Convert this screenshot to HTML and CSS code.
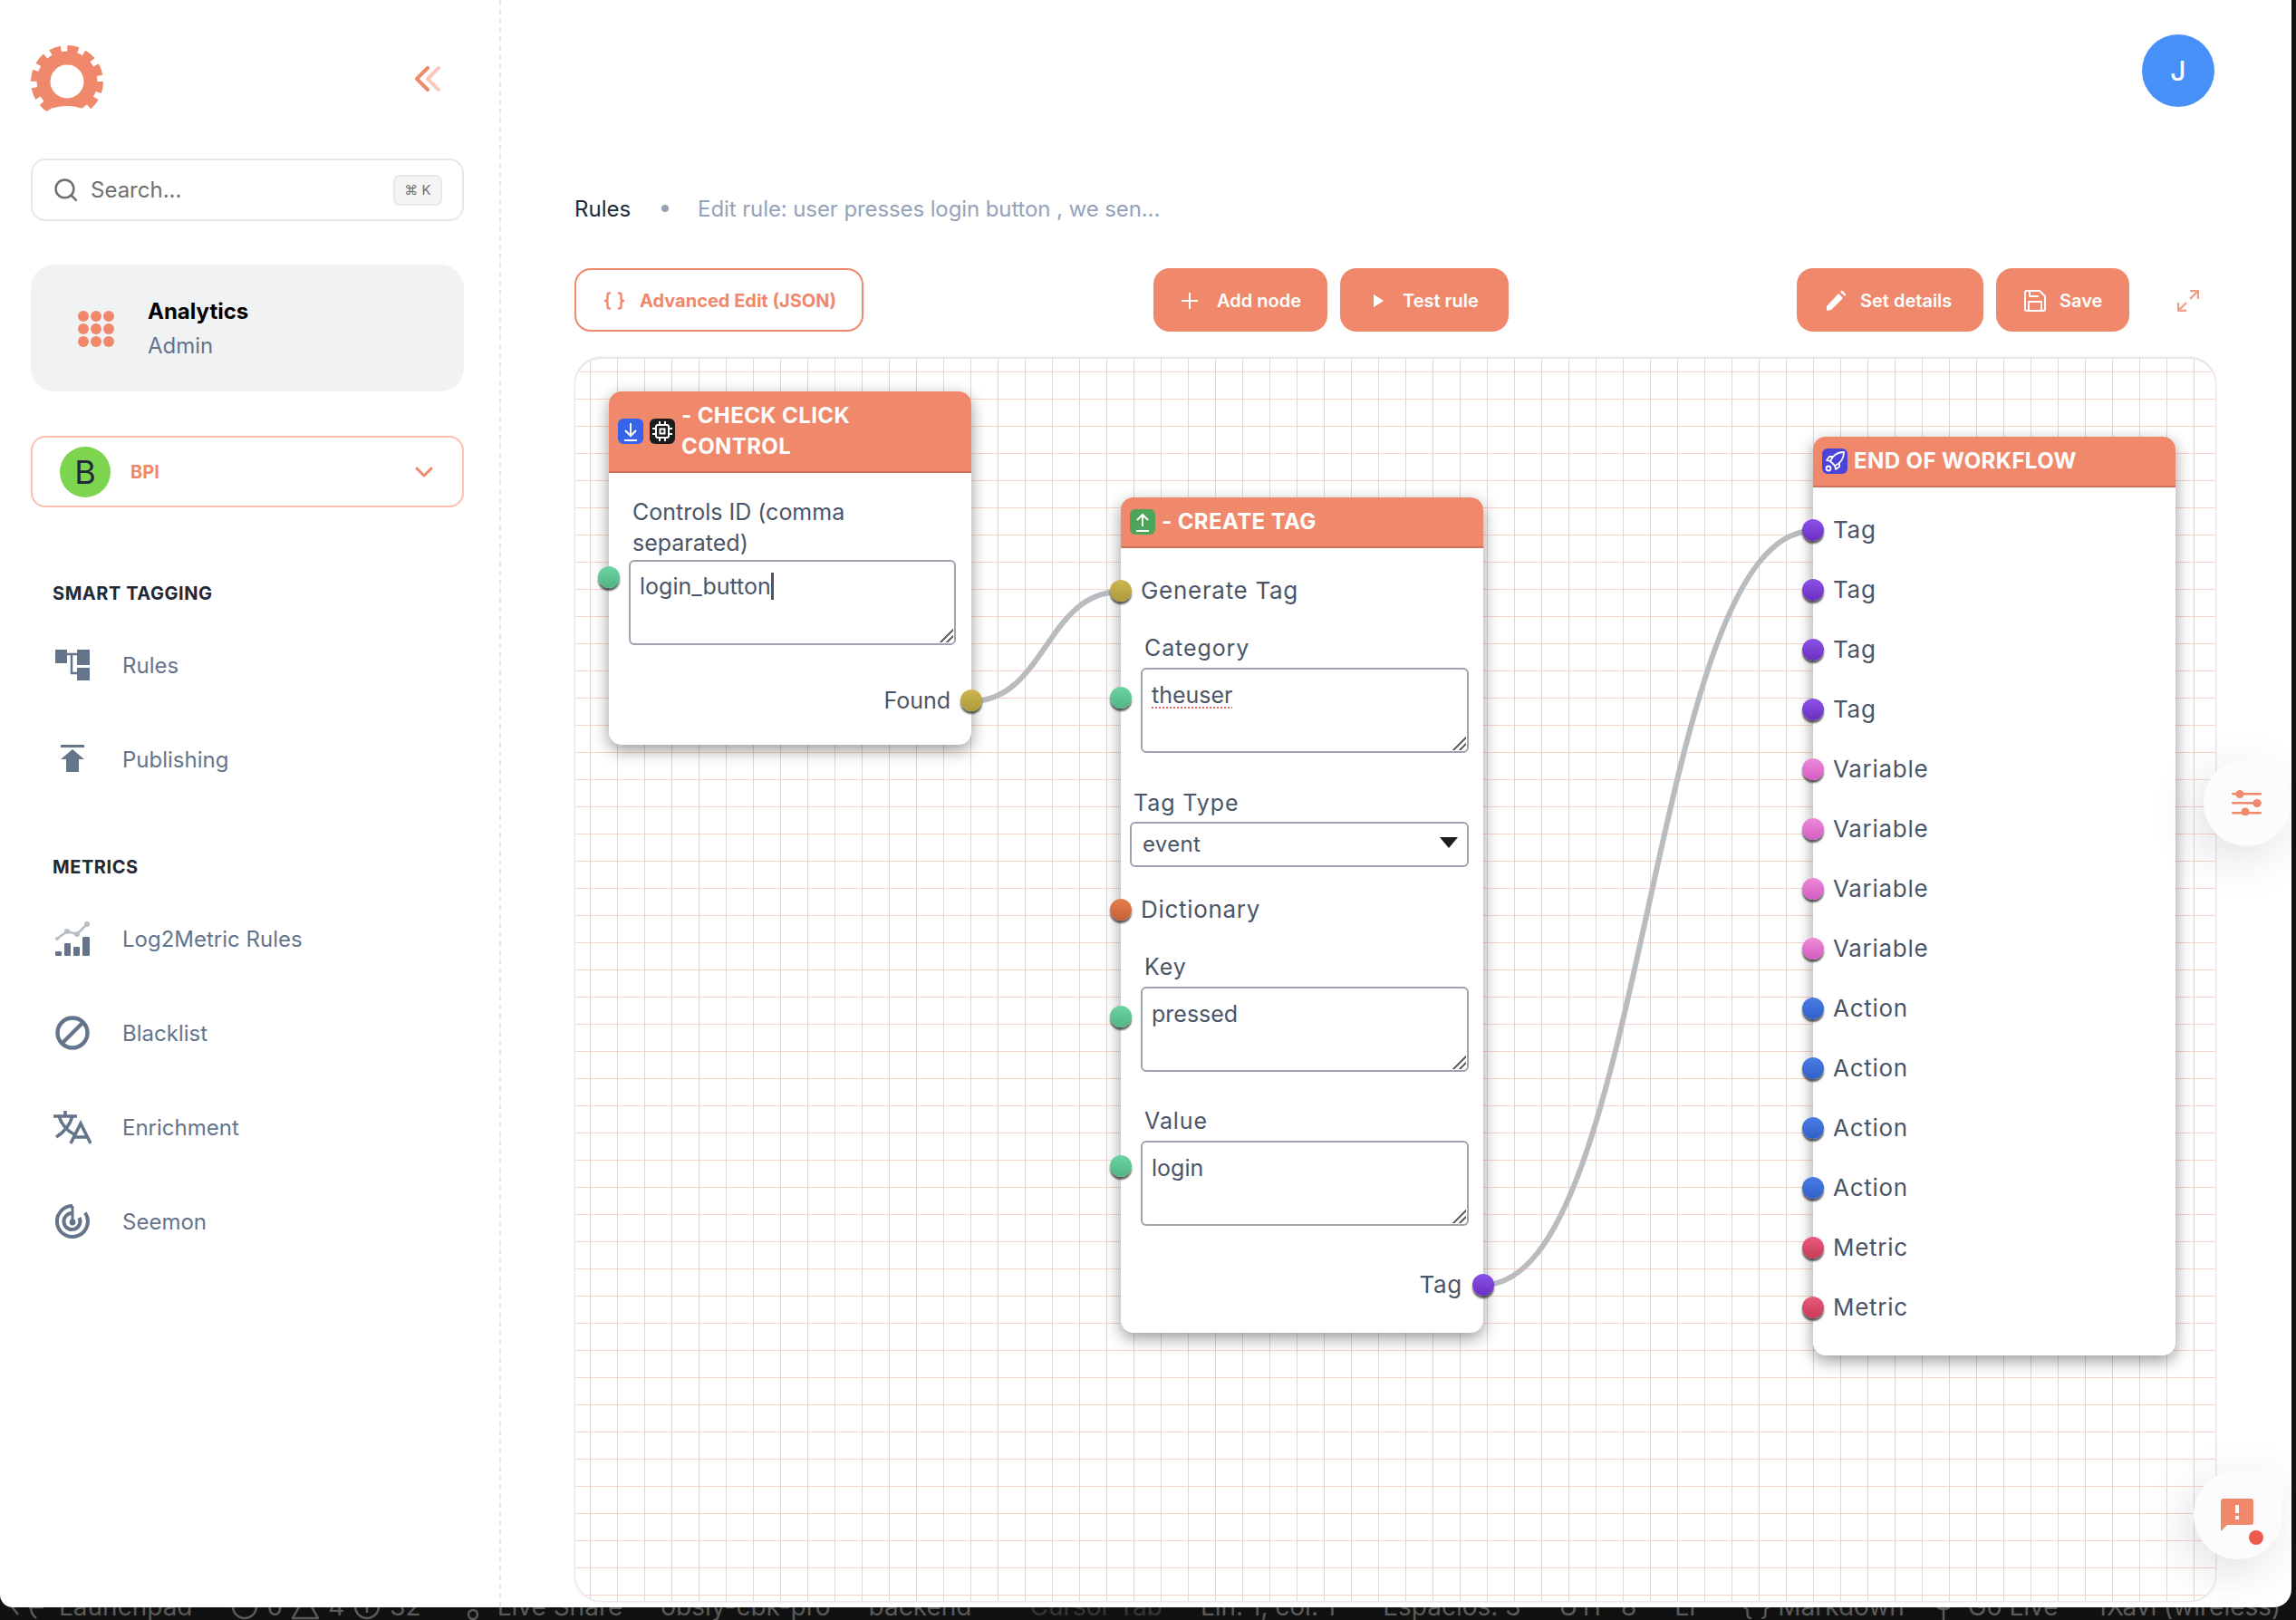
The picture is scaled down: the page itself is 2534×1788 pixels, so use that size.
FILE: index.html
```html
<!DOCTYPE html>
<html lang="en">
<head>
  <meta charset="UTF-8" />
  <title>Rules - Edit rule</title>
  <link rel="stylesheet" href="styles.css">
</head>
<body>

  <div class="panel">
    <aside class="sidebar">
      <div class="brand">
        <svg class="gear" viewBox="0 0 80 80">
          <circle cx="40" cy="40" r="26" fill="none" stroke="#f0886b" stroke-width="15" />
          <circle cx="40" cy="40" r="36" fill="none" stroke="#f0886b" stroke-width="8" stroke-dasharray="12 6.85" />
          <ellipse cx="40" cy="80" rx="27" ry="13" fill="#fff" />
        </svg>
        <svg class="collapse" viewBox="0 0 28 28" fill="none" stroke-width="4" stroke-linecap="round" stroke-linejoin="round">
          <path d="M14 2 L2 14 L14 26" stroke="#f0886b" />
          <path d="M26 2 L14 14 L26 26" stroke="#fbc9bb" />
        </svg>
      </div>

      <div class="search">
        <svg class="search-icon" viewBox="0 0 24 24" fill="none" stroke="#6f6f6f" stroke-width="2.4" stroke-linecap="round">
          <circle cx="11" cy="11" r="9.5" />
          <path d="M18 18 L23 23" />
        </svg>
        <span class="search-text">Search...</span>
        <span class="kbd">⌘&nbsp;K</span>
      </div>

      <div class="app-card">
        <div class="dots">
          <i></i><i></i><i></i><i></i><i></i><i></i><i></i><i></i><i></i>
        </div>
        <div>
          <div class="app-name">Analytics</div>
          <div class="app-role">Admin</div>
        </div>
      </div>

      <div class="org-select">
        <span class="org-avatar">B</span>
        <span class="org-name">BPI</span>
        <svg class="org-chevron" viewBox="0 0 20 12" fill="none" stroke="#f0886b" stroke-width="3" stroke-linecap="round" stroke-linejoin="round">
          <path d="M2 2 L10 10 L18 2" />
        </svg>
      </div>

      <h3 class="nav-title">SMART TAGGING</h3>
      <ul class="nav-list">
        <li>
          <svg class="nav-icon" viewBox="0 0 38 38" fill="#64748b">
            <rect x="0" y="2" width="13" height="15" />
            <rect x="24" y="2" width="14" height="17" />
            <rect x="24" y="22" width="14" height="14" />
            <path d="M13 7 H24 M18 7 V28 H24" fill="none" stroke="#64748b" stroke-width="2.5" />
          </svg>
          <a href="#">Rules</a>
        </li>
        <li>
          <svg class="nav-icon" viewBox="0 0 38 38" fill="#64748b">
            <rect x="6" y="3" width="26" height="3" />
            <path d="M19 8 L32 19 H26 V33 H12 V19 H6 Z" />
          </svg>
          <a href="#">Publishing</a>
        </li>
      </ul>

      <h3 class="nav-title nav-title-second">METRICS</h3>
      <ul class="nav-list">
        <li>
          <svg class="nav-icon" viewBox="0 0 38 38" fill="#64748b">
            <path d="M2 19 L13 11 L24 14 L36 2" fill="none" stroke="#b7bdc7" stroke-width="2.5" />
            <circle cx="13" cy="11" r="3" fill="#b7bdc7" />
            <circle cx="24" cy="14" r="3" fill="#b7bdc7" />
            <circle cx="35" cy="3" r="3" fill="#b7bdc7" />
            <circle cx="2" cy="19" r="2" fill="#b7bdc7" />
            <rect x="0" y="33" width="7" height="5" rx="1" />
            <rect x="10" y="24" width="7" height="14" rx="1" />
            <rect x="20" y="28" width="7" height="10" rx="1" />
            <rect x="30" y="17" width="8" height="21" rx="1" />
          </svg>
          <a href="#">Log2Metric Rules</a>
        </li>
        <li>
          <svg class="nav-icon" viewBox="0 0 38 38" fill="none" stroke="#64748b" stroke-width="4.4">
            <circle cx="19" cy="19" r="16.5" />
            <path d="M7 31 L31 7" />
          </svg>
          <a href="#">Blacklist</a>
        </li>
        <li>
          <svg class="nav-icon nav-icon-wide" viewBox="0 0 42 38" fill="none" stroke="#64748b" stroke-width="3.6">
            <path d="M0 7 H26 M13 1 V7 M6 7 C9 16 15 23 23 27 M21 7 C18 17 11 25 3 30" />
            <path d="M19 37 L30 15 L41 37 M23 30 H37" />
          </svg>
          <a href="#">Enrichment</a>
        </li>
        <li>
          <svg class="nav-icon" viewBox="0 0 38 38" fill="none" stroke="#64748b" stroke-width="4">
            <path d="M19 2 A17 17 0 1 0 33 9.5" />
            <path d="M19 10 A9 9 0 1 0 26.5 15" />
            <path d="M19 2 V21" stroke-width="3" />
            <circle cx="19" cy="20" r="3.4" fill="#64748b" stroke="none" />
          </svg>
          <a href="#">Seemon</a>
        </li>
      </ul>
    </aside>

    <main class="main">
      <div class="topbar"><span class="avatar">J</span></div>

      <div class="breadcrumb">
        <span class="crumb">Rules</span>
        <span class="crumb-dot"></span>
        <span class="crumb-current">Edit rule: user presses login button , we sen...</span>
      </div>

      <div class="toolbar">
        <button class="btn btn-outline">
          <svg class="btn-icon" viewBox="0 0 24 20" fill="none" stroke="#f0886b" stroke-width="2.4" stroke-linecap="round" stroke-linejoin="round">
            <path d="M7 1.5 H6.5 Q4.5 1.5 4.5 4 V7.5 Q4.5 10 2 10 Q4.5 10 4.5 12.5 V16 Q4.5 18.5 6.5 18.5 H7" />
            <path d="M17 1.5 H17.5 Q19.5 1.5 19.5 4 V7.5 Q19.5 10 22 10 Q19.5 10 19.5 12.5 V16 Q19.5 18.5 17.5 18.5 H17" />
          </svg>
          Advanced Edit (JSON)
        </button>
        <div class="btn-group btn-group-center">
          <button class="btn btn-add">
            <svg class="btn-icon btn-icon-plus" viewBox="0 0 18 18" fill="none" stroke="#fff" stroke-width="2">
              <path d="M9 0 V18 M0 9 H18" />
            </svg>
            Add node
          </button>
          <button class="btn btn-test">
            <svg class="btn-icon btn-icon-play" viewBox="0 0 11 14" fill="#fff">
              <path d="M0 0 L11 7 L0 14 Z" />
            </svg>
            Test rule
          </button>
        </div>
        <div class="btn-group btn-group-right">
          <button class="btn btn-details">
            <svg class="btn-icon" viewBox="0 0 24 24" fill="#fff">
              <path d="M2 18 L15 4 L20 9 L7 22 L2 23 Z" />
              <path d="M17 2 L19 0.5 L23.5 5 L22 7 Z" />
            </svg>
            Set details
          </button>
          <button class="btn btn-save">
            <svg class="btn-icon" viewBox="0 0 24 24" fill="none" stroke="#fff" stroke-width="2" stroke-linejoin="round">
              <path d="M3 1 H17 L23 7 V21 Q23 23 21 23 H3 Q1 23 1 21 V3 Q1 1 3 1 Z" />
              <path d="M6 1 V7 H16 M5 23 V13 H19 V23" />
            </svg>
            Save
          </button>
        </div>
        <svg class="expand" viewBox="0 0 24 24" fill="none" stroke="#f0a08a" stroke-width="2.4">
          <path d="M14 1 H23 V10 M23 1 L14 10" />
          <path d="M10 23 H1 V14 M1 23 L10 14" />
        </svg>
      </div>

      <div class="canvas">
        <svg class="wires" fill="none" stroke="#b9bbbf" stroke-width="6">
          <path d="M436 378 C519 378 519 257 602 257" />
          <path d="M1002 1022 C1184 1022 1184 190 1366 190" />
        </svg>

        <!-- node 1 -->
        <div class="node node-check">
          <div class="node-head">
            <span class="badge badge-blue">
              <svg viewBox="0 0 28 28" fill="none" stroke="#fff" stroke-width="2"><path d="M14 5 V18 M8 13 L14 19 L20 13 M7 24 H21" /></svg>
            </span>
            <span class="badge badge-black">
              <svg viewBox="0 0 28 28" fill="none" stroke="#fff" stroke-width="2"><rect x="7" y="7" width="14" height="14" rx="2" /><rect x="11.5" y="11.5" width="5" height="5" /><path d="M11 3 V6 M17 3 V6 M11 22 V25 M17 22 V25 M3 11 H6 M3 17 H6 M22 11 H25 M22 17 H25" /></svg>
            </span>
            <span class="node-title">- CHECK CLICK CONTROL</span>
          </div>
          <div class="node-body">
            <div class="port port-wrapped">
              <span class="socket socket-in socket-green socket-wrapped"></span>
              <label class="field-label">Controls ID (comma separated)</label>
              <div class="field-box field-box-check">login_button<span class="caret"></span></div>
            </div>
            <div class="port port-out port-found">
              <span>Found</span>
              <span class="socket socket-out socket-yellow"></span>
            </div>
          </div>
        </div>

        <!-- node 2 -->
        <div class="node node-tag">
          <div class="node-head">
            <span class="badge badge-green">
              <svg viewBox="0 0 28 28" fill="none" stroke="#fff" stroke-width="2"><path d="M14 6 V19 M8 12 L14 6 L20 12 M7 24 H21" /></svg>
            </span>
            <span class="node-title">- CREATE TAG</span>
          </div>
          <div class="node-body">
            <div class="port port-text port-first">
              <span class="socket socket-in socket-yellow"></span>
              Generate Tag
            </div>
            <div class="port port-field port-category">
              <span class="socket socket-in socket-green socket-field"></span>
              <label class="field-label">Category</label>
              <div class="field-box"><span class="spell">theuser</span></div>
            </div>
            <div class="port port-select">
              <label class="field-label">Tag Type</label>
              <div class="select-wrap">
                <select>
                  <option>event</option>
                </select>
              </div>
            </div>
            <div class="port port-text port-dict">
              <span class="socket socket-in socket-orange"></span>
              Dictionary
            </div>
            <div class="port port-field port-key">
              <span class="socket socket-in socket-green socket-field"></span>
              <label class="field-label">Key</label>
              <div class="field-box">pressed</div>
            </div>
            <div class="port port-field port-value">
              <span class="socket socket-in socket-green socket-value"></span>
              <label class="field-label">Value</label>
              <div class="field-box">login</div>
            </div>
            <div class="port port-out port-tag">
              <span>Tag</span>
              <span class="socket socket-out socket-purple"></span>
            </div>
          </div>
        </div>

        <!-- node 3 -->
        <div class="node node-end">
          <div class="node-head">
            <span class="badge badge-indigo">
              <svg viewBox="0 0 28 28" fill="none" stroke="#fff" stroke-width="1.8" stroke-linejoin="round"><path d="M24 4 C17 4 11 8 9 14 L14 19 C20 17 24 11 24 4 Z" /><path d="M9 14 L5 13 L8 9 H12 M14 19 L15 23 L19 20 V16" /><circle cx="7" cy="22" r="2.5" /></svg>
            </span>
            <span class="node-title">END OF WORKFLOW</span>
          </div>
          <div class="node-body node-body-list">
            <div class="port port-row"><span class="socket socket-in socket-purple"></span>Tag</div>
            <div class="port port-row"><span class="socket socket-in socket-purple"></span>Tag</div>
            <div class="port port-row"><span class="socket socket-in socket-purple"></span>Tag</div>
            <div class="port port-row"><span class="socket socket-in socket-purple"></span>Tag</div>
            <div class="port port-row"><span class="socket socket-in socket-pink"></span>Variable</div>
            <div class="port port-row"><span class="socket socket-in socket-pink"></span>Variable</div>
            <div class="port port-row"><span class="socket socket-in socket-pink"></span>Variable</div>
            <div class="port port-row"><span class="socket socket-in socket-pink"></span>Variable</div>
            <div class="port port-row"><span class="socket socket-in socket-blue"></span>Action</div>
            <div class="port port-row"><span class="socket socket-in socket-blue"></span>Action</div>
            <div class="port port-row"><span class="socket socket-in socket-blue"></span>Action</div>
            <div class="port port-row"><span class="socket socket-in socket-blue"></span>Action</div>
            <div class="port port-row"><span class="socket socket-in socket-red"></span>Metric</div>
            <div class="port port-row"><span class="socket socket-in socket-red"></span>Metric</div>
          </div>
        </div>
      </div>
    </main>

    <button class="float-btn float-settings">
      <svg viewBox="0 0 34 28" fill="#f0886b">
        <rect x="0" y="3" width="33" height="2.6" rx="1.3" />
        <rect x="0" y="13" width="33" height="2.6" rx="1.3" />
        <rect x="0" y="24" width="33" height="2.6" rx="1.3" />
        <circle cx="9" cy="4.5" r="4.5" />
        <circle cx="28" cy="14.5" r="4.5" />
        <circle cx="15" cy="24" r="4.5" />
      </svg>
    </button>
    <button class="float-btn float-feedback">
      <svg viewBox="0 0 36 36" fill="#f0886b">
        <path d="M3 0 H33 Q36 0 36 3 V26 Q36 29 33 29 H7 L0 36 V3 Q0 0 3 0 Z" />
        <rect x="16" y="7" width="4" height="9" fill="#fff" />
        <rect x="16" y="19" width="4" height="4" fill="#fff" />
      </svg>
      <span class="float-dot"></span>
    </button>
  </div>

  <footer class="statusbar">
    <div class="status-row">
      <span class="status-item status-remote">
        <svg class="status-icon" viewBox="0 0 44 30"><path d="M2 6 L16 24 M36 4 C28 10 28 22 36 28 M28 16 H44" /></svg>
        Launchpad
      </span>
      <span class="status-item status-problems">
        <svg class="status-icon status-icon-small" viewBox="0 0 30 30"><circle cx="15" cy="15" r="13" /></svg>
        0
        <svg class="status-icon status-icon-small" viewBox="0 0 30 30"><path d="M15 3 L29 28 H1 Z" /></svg>
        4
        <svg class="status-icon status-icon-small" viewBox="0 0 30 30"><circle cx="15" cy="15" r="13" /><path d="M15 8 V22" /></svg>
        32
      </span>
      <span class="status-item">
        <svg class="status-icon status-icon-small" viewBox="0 0 30 30"><circle cx="15" cy="24" r="5" /></svg>
        Live Share
      </span>
      <span class="status-item">obsly-cbk-pro</span>
      <span class="status-item">backend</span>
      <span class="status-item status-dim">Cursor Tab</span>
      <span class="status-item">Lín. 1, col. 1</span>
      <span class="status-item status-spaces">Espacios: 3</span>
      <span class="status-item">UTF-8</span>
      <span class="status-item">LF</span>
      <span class="status-item">{ } Markdown</span>
      <span class="status-item status-live">
        <svg class="status-icon status-icon-small" viewBox="0 0 30 30"><path d="M15 10 V30 M6 4 C4 12 8 18 15 18 C22 18 26 12 24 4" /></svg>
        Go Live
      </span>
      <span class="status-item">1Xavi (wireless)</span>
    </div>
  </footer>

</body>
</html>
```

FILE: styles.css
```css
/* Reset and base */
* {
  box-sizing: border-box;
  margin: 0;
  padding: 0;
}
html, body {
  width: 2534px;
  height: 1788px;
  overflow: hidden;
  background: #111;
  font-family: Inter, "Liberation Sans", sans-serif;
}

.panel {
  position: relative;
  display: flex;
  width: 2529px;
  height: 1774px;
  background: #fff;
  border-radius: 0 0 20px 14px;
  overflow: hidden;
}

/* Sidebar */
.sidebar {
  width: 553px;
  flex-shrink: 0;
  padding: 50px 39px 0 34px;
  border-right: 2px dashed #e5e7eb;
}
.brand {
  display: flex;
  justify-content: space-between;
  align-items: flex-start;
  height: 125px;
}
.gear {
  width: 80px;
  height: 80px;
}
.collapse {
  width: 28px;
  height: 28px;
  margin: 23px 26px 0 0;
}

.search {
  display: flex;
  align-items: center;
  height: 69px;
  padding: 0 22px 0 24px;
  border: 2px solid #e5e7eb;
  border-radius: 16px;
}
.search-icon {
  width: 25px;
  height: 25px;
}
.search-text {
  flex-grow: 1;
  margin-left: 15px;
  font-size: 24px;
  color: #6f6f6f;
}
.kbd {
  display: flex;
  align-items: center;
  justify-content: center;
  width: 54px;
  height: 34px;
  background: #f4f4f5;
  border: 2px solid #e8e8e8;
  border-radius: 7px;
  font-size: 15px;
  color: #6f6f6f;
}

.app-card {
  display: flex;
  align-items: center;
  height: 140px;
  margin-top: 48px;
  padding: 1px 0 0 52px;
  background: #f1f2f4;
  border-radius: 26px;
}
.dots {
  display: grid;
  grid-template-columns: repeat(3, 12px);
  gap: 2px;
  margin-right: 37px;
}
.dots i {
  width: 12px;
  height: 12px;
  border-radius: 50%;
  background: #f0886b;
}
.app-name {
  font-size: 24px;
  font-weight: 700;
  color: #000;
  line-height: 34px;
}
.app-role {
  margin-top: 4px;
  font-size: 24px;
  color: #64748b;
  line-height: 34px;
}

.org-select {
  display: flex;
  align-items: center;
  height: 79px;
  margin-top: 49px;
  padding: 0 32px 0 30px;
  border: 2px solid #fbbfb0;
  border-radius: 16px;
}
.org-avatar {
  display: flex;
  align-items: center;
  justify-content: center;
  width: 56px;
  height: 56px;
  border-radius: 50%;
  background: #7dd44f;
  color: #1f2937;
  font-size: 36px;
}
.org-name {
  flex-grow: 1;
  margin-left: 22px;
  font-size: 20px;
  font-weight: 700;
  color: #f0886b;
}
.org-chevron {
  width: 20px;
  height: 12px;
}

.nav-title {
  margin: 81px 0 0 24px;
  font-size: 20px;
  font-weight: 700;
  line-height: 28px;
  letter-spacing: 0.55px;
  color: #1f2937;
}
.nav-title-second {
  margin-top: 53px;
}
.nav-list {
  list-style: none;
  margin-top: 13px;
}
.nav-list li {
  display: flex;
  align-items: center;
  height: 104px;
  padding-left: 27px;
}
.nav-list a {
  margin-left: 36px;
  font-size: 24px;
  color: #64748b;
  text-decoration: none;
}
.nav-icon {
  width: 38px;
  height: 38px;
  flex-shrink: 0;
}
.nav-icon-wide {
  width: 42px;
  margin: 0 -2px;
}

/* Main content */
.main {
  flex-grow: 1;
  padding: 38px 83px 0 81px;
}
.topbar {
  display: flex;
  justify-content: flex-end;
  height: 80px;
}
.avatar {
  display: flex;
  align-items: center;
  justify-content: center;
  width: 80px;
  height: 80px;
  margin-right: 2px;
  border-radius: 50%;
  background: #4790f7;
  color: #fff;
  font-size: 30px;
  font-weight: 500;
}
.breadcrumb {
  display: flex;
  align-items: center;
  height: 34px;
  margin-top: 95px;
  font-size: 24px;
}
.crumb {
  color: #1f2937;
}
.crumb-dot {
  width: 8px;
  height: 8px;
  margin: 0 32px 0 34px;
  border-radius: 50%;
  background: #94a3b8;
}
.crumb-current {
  color: #94a3b8;
  letter-spacing: -0.1px;
}

.toolbar {
  display: flex;
  align-items: center;
  margin-top: 49px;
}
.btn {
  display: flex;
  align-items: center;
  height: 70px;
  padding: 2px 0 0 31px;
  border: none;
  border-radius: 18px;
  background: #f0886b;
  color: #fff;
  font-family: inherit;
  font-size: 20px;
  font-weight: 600;
  white-space: nowrap;
  cursor: pointer;
}
.btn-add { width: 192px; }
.btn-test { width: 186px; }
.btn-details { width: 206px; }
.btn-save { width: 147px; }
.btn-outline {
  width: 319px;
  padding-left: 30px;
  background: #fff;
  border: 2px solid #f0886b;
  color: #f0886b;
  font-weight: 700;
}
.btn-icon {
  width: 24px;
  height: 24px;
  margin-right: 15px;
}
.btn-outline .btn-icon {
  margin-right: 16px;
}
.btn-icon-plus {
  width: 18px;
  height: 18px;
  margin-right: 21px;
}
.btn-icon-play {
  width: 11px;
  height: 14px;
  margin-right: 21px;
  margin-left: 6px;
}
.btn-group {
  display: flex;
  gap: 14px;
}
.btn-group-center {
  margin-left: 320px;
}
.btn-group-right {
  margin-left: auto;
}
.expand {
  width: 24px;
  height: 24px;
  margin: 2px 19px 0 53px;
}

/* Node canvas */
.canvas {
  position: relative;
  height: 1374px;
  margin-top: 28px;
  border: 1px solid #e8e8e8;
  border-top-width: 2px;
  border-radius: 30px;
  box-shadow: 0 0 2px rgb(0 0 0 / 0.15);
  background-color: #fff;
  background-image:
    linear-gradient(to right, #f7cec3 1px, transparent 1px),
    linear-gradient(to bottom, #f9d3c9 1px, transparent 1px);
  background-size: 30px 30px;
  background-position: 16px 14px;
  overflow: hidden;
}
.wires {
  position: absolute;
  left: 0;
  top: 0;
  width: 100%;
  height: 100%;
}

.node {
  position: absolute;
  width: 400px;
  background: #fff;
  border-radius: 14px;
  box-shadow: 0 6px 18px rgb(0 0 0 / 0.4);
  color: #4a5568;
  font-size: 26px;
  letter-spacing: 0.7px;
}
.node-check {
  left: 37px;
  top: 36px;
  height: 390px;
  font-size: 25px;
  letter-spacing: 0;
}
.node-tag {
  left: 602px;
  top: 153px;
  height: 922px;
}
.node-end {
  left: 1366px;
  top: 86px;
  height: 1014px;
}

.node-head {
  display: flex;
  align-items: center;
  gap: 7px;
  min-height: 56px;
  padding: 0 40px 0 10px;
  background: #f0886b;
  border-bottom: 2px solid #cd755b;
  border-radius: 14px 14px 0 0;
  color: #fff;
}
.node-check .node-head {
  height: 90px;
}
.node-title {
  font-size: 24px;
  font-weight: 700;
  line-height: 34px;
  letter-spacing: 0.4px;
}
.badge {
  display: flex;
  flex-shrink: 0;
  width: 28px;
  height: 28px;
  border-radius: 6px;
}
.badge svg {
  width: 28px;
  height: 28px;
}
.badge-blue { background: #3563e9; }
.badge-black { background: #1c1c1c; }
.badge-green { background: #4ca65a; }
.badge-indigo { background: #4a44d8; }

.port {
  position: relative;
  line-height: 34px;
}
.port-text {
  padding-left: 22px;
}
.port-first { margin-top: 30px; }
.port-category { margin-top: 29px; }
.port-select { margin-top: 38px; }
.port-dict { margin-top: 30px; }
.port-key { margin-top: 29px; }
.port-value { margin-top: 37px; }
.port-tag { margin-top: 48px; }
.port-wrapped { margin-top: 26px; }
.port-found { margin-top: 44px; }
.port-out {
  display: flex;
  justify-content: flex-end;
  padding-right: 23px;
}
.node-body-list {
  padding-top: 14px;
}
.port-row {
  display: flex;
  align-items: center;
  height: 66px;
  padding-left: 22px;
}

.field-label {
  display: block;
  padding-left: 26px;
  margin-bottom: 5px;
  padding-right: 40px;
  font-size: 25px;
  letter-spacing: 0.9px;
}
.port-select .field-label {
  padding-left: 14px;
  margin-bottom: 4px;
}
.port-wrapped .field-label {
  padding-left: 26px;
  margin-bottom: 2px;
  letter-spacing: 0;
}
.field-box {
  position: relative;
  width: 362px;
  height: 94px;
  margin-left: 22px;
  padding: 11px 10px;
  border: 2px solid #9ca3af;
  border-radius: 6px;
  background: #fff;
  font-size: 25px;
  line-height: 34px;
  letter-spacing: 0;
}
/* hand drawn resize grip */
.field-box::after {
  content: "";
  position: absolute;
  right: 1px;
  bottom: 1px;
  width: 15px;
  height: 15px;
  background: linear-gradient(135deg,
    transparent 0 48%, #666 48% 57%,
    transparent 57% 72%, #666 72% 81%,
    transparent 81%);
}
.field-box-check {
  width: 361px;
  padding-top: 10px;
}
.select-wrap {
  position: relative;
  width: 374px;
  margin-left: 10px;
}
.select-wrap select {
  display: block;
  width: 100%;
  height: 50px;
  padding: 0 0 2px 12px;
  appearance: none;
  border: 2px solid #9ca3af;
  border-radius: 6px;
  background: #fff;
  color: #4a5568;
  font-family: inherit;
  font-size: 24px;
  letter-spacing: 0.3px;
}
.select-wrap::after {
  content: "";
  position: absolute;
  right: 12px;
  top: 17px;
  border-left: 10px solid transparent;
  border-right: 10px solid transparent;
  border-top: 12px solid #1c1c1c;
}
.spell {
  text-decoration: underline dotted #f0605a 2px;
  text-underline-offset: 4px;
}
.caret {
  display: inline-block;
  width: 3px;
  height: 30px;
  vertical-align: -6px;
  background: #4a5568;
}

/* Sockets */
.socket {
  position: absolute;
  top: 50%;
  width: 24px;
  height: 24px;
  margin-top: -12px;
  border-radius: 50%;
  box-shadow: 0 3px 2px rgb(40 40 40 / 0.75);
}
.socket-in { left: -12px; }
.socket-out { right: -12px; }
.socket-field { top: 72px; }
.socket-value { top: 67px; }
.socket-wrapped { top: 89px; }
.socket-green { background: linear-gradient(#6dd3a0, #4fb585); }
.socket-yellow { background: linear-gradient(#cdb64f, #ad9a3c); }
.socket-orange { background: linear-gradient(#e67f4c, #c55f37); }
.socket-purple { background: linear-gradient(#8c52e8, #6a2fc0); }
.socket-pink { background: linear-gradient(#ec8ada, #d45cc0); }
.socket-blue { background: linear-gradient(#4a7ce4, #3060c8); }
.socket-red { background: linear-gradient(#e85a7c, #c63c58); }

/* Floating buttons */
.float-btn {
  position: absolute;
  border: none;
  background: #fcfcfc;
  box-shadow: -10px 14px 50px rgb(60 70 90 / 0.16);
}
.float-settings {
  left: 2432px;
  top: 838px;
  width: 96px;
  height: 96px;
  border-radius: 50%;
}
.float-settings svg {
  display: block;
  width: 34px;
  height: 28px;
  margin: 0 0 0 31px;
}
.float-feedback {
  left: 2421px;
  top: 1623px;
  width: 98px;
  height: 98px;
  border-radius: 50% 6px 50% 50%;
}
.float-feedback svg {
  display: block;
  width: 36px;
  height: 36px;
  margin-left: 30px;
}
.float-dot {
  position: absolute;
  left: 61px;
  top: 66px;
  width: 16px;
  height: 16px;
  border-radius: 50%;
  background: #ef5a4f;
}

/* Status bar cut off by the page above */
.statusbar {
  height: 14px;
  overflow: hidden;
  color: #5a5a5a;
  font-size: 28px;
  line-height: 30px;
}
.status-row {
  display: flex;
  gap: 42px;
  height: 34px;
  margin-top: -16px;
  padding-left: 4px;
  white-space: nowrap;
}
.status-item {
  display: flex;
  align-items: center;
  gap: 12px;
  height: 30px;
}
.status-remote {
  gap: 17px;
}
.status-problems {
  gap: 10px;
}
.status-spaces {
  margin-left: 10px;
}
.status-live {
  margin-left: -14px;
}
.status-icon {
  width: 44px;
  height: 30px;
  fill: none;
  stroke: #5a5a5a;
  stroke-width: 2.5;
}
.status-icon-small {
  width: 30px;
}
.status-dim {
  margin-left: 22px;
  color: #363636;
}
```
